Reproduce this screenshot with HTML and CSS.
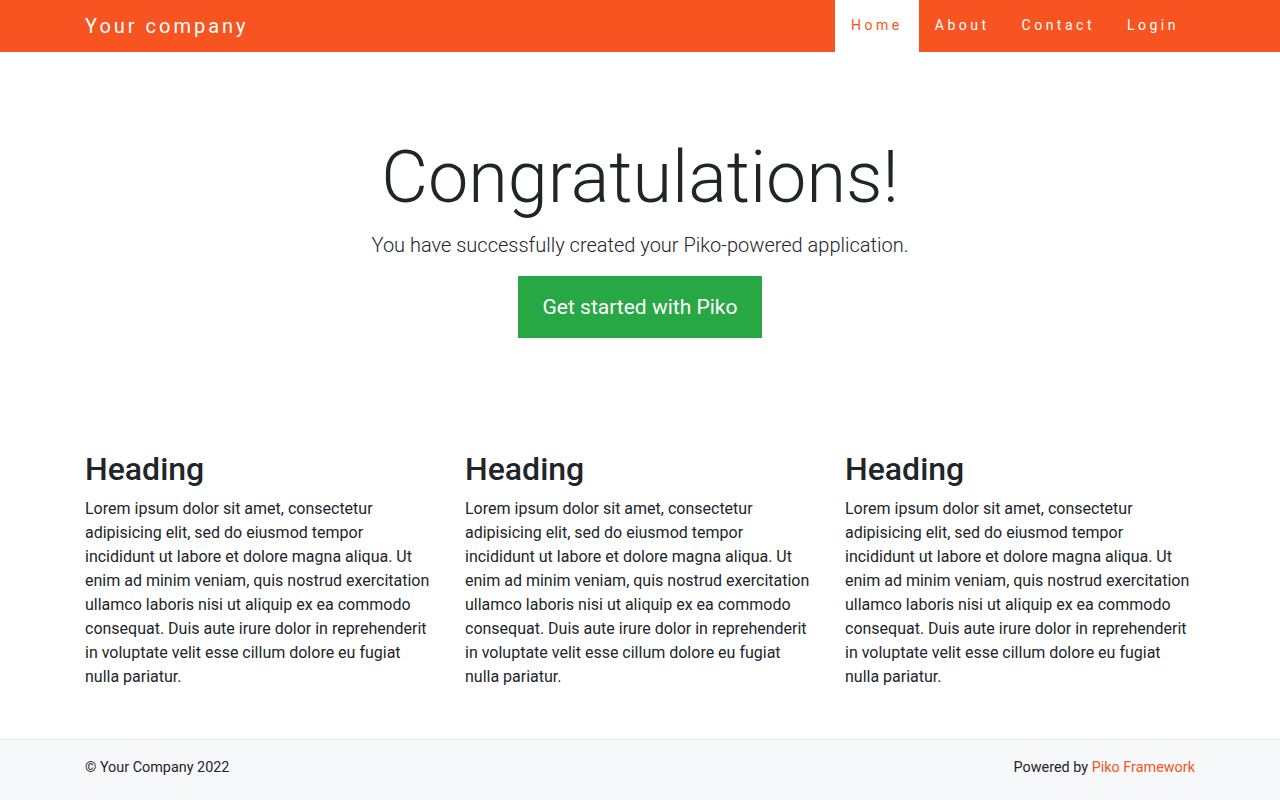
FILE: index.html
```html
<!DOCTYPE html>
<html lang="en">
<head>
<meta charset="utf-8">
<title>Piko</title>
<link rel="stylesheet" href="styles.css">
</head>
<body>
<header class="navbar">
  <div class="container nav-inner">
    <a class="brand" href="#">Your company</a>
    <nav class="nav">
      <a class="nav-link active" href="#">Home</a>
      <a class="nav-link" href="#">About</a>
      <a class="nav-link" href="#">Contact</a>
      <a class="nav-link" href="#">Login</a>
    </nav>
  </div>
</header>
<main>
  <section class="hero">
    <h1 class="hero-title">Congratulations!</h1>
    <p class="lead">You have successfully created your Piko-powered application.</p>
    <a class="btn" href="#">Get started with Piko</a>
  </section>
  <section class="container cols">
    <div class="col">
      <h2>Heading</h2>
      <p>Lorem ipsum dolor sit amet, consectetur adipisicing elit, sed do eiusmod tempor incididunt ut labore et dolore magna aliqua. Ut enim ad minim veniam, quis nostrud exercitation ullamco laboris nisi ut aliquip ex ea commodo consequat. Duis aute irure dolor in reprehenderit in voluptate velit esse cillum dolore eu fugiat nulla pariatur.</p>
    </div>
    <div class="col">
      <h2>Heading</h2>
      <p>Lorem ipsum dolor sit amet, consectetur adipisicing elit, sed do eiusmod tempor incididunt ut labore et dolore magna aliqua. Ut enim ad minim veniam, quis nostrud exercitation ullamco laboris nisi ut aliquip ex ea commodo consequat. Duis aute irure dolor in reprehenderit in voluptate velit esse cillum dolore eu fugiat nulla pariatur.</p>
    </div>
    <div class="col">
      <h2>Heading</h2>
      <p>Lorem ipsum dolor sit amet, consectetur adipisicing elit, sed do eiusmod tempor incididunt ut labore et dolore magna aliqua. Ut enim ad minim veniam, quis nostrud exercitation ullamco laboris nisi ut aliquip ex ea commodo consequat. Duis aute irure dolor in reprehenderit in voluptate velit esse cillum dolore eu fugiat nulla pariatur.</p>
    </div>
  </section>
</main>
<footer class="footer">
  <div class="container footer-inner">
    <span>© Your Company 2022</span>
    <span>Powered by <a href="#">Piko Framework</a></span>
  </div>
</footer>
</body>
</html>
```

FILE: styles.css
```css
* { box-sizing: border-box; }
html, body { margin: 0; padding: 0; }
body {
  font-family: Roboto, "Liberation Sans", sans-serif;
  font-size: 16px;
  line-height: 1.5;
  color: #212529;
  background: #fff;
}
a { text-decoration: none; }
.container {
  width: 1140px;
  margin: 0 auto;
  padding: 0 15px;
}
.navbar {
  background: #f75421;
  height: 52px;
}
.nav-inner {
  display: flex;
  justify-content: space-between;
  align-items: center;
  height: 52px;
}
.brand {
  color: #fff;
  font-size: 20px;
  letter-spacing: 3px;
}
.nav {
  display: flex;
  height: 52px;
}
.nav-link {
  display: flex;
  align-items: center;
  padding: 0 16px 1px;
  color: #fff;
  font-size: 14px;
  letter-spacing: 3.5px;
}
.nav-link.active {
  background: #fff;
  color: #f75421;
}
.hero {
  text-align: center;
  padding: 83px 0 0;
}
.hero-title {
  margin: 0;
  font-size: 72px;
  font-weight: 300;
  line-height: 1.2;
}
.lead {
  margin: 9px 0 16px;
  font-size: 20px;
  font-weight: 300;
  line-height: 1.5;
}
.btn {
  display: inline-block;
  background: #28a745;
  color: #fff;
  font-size: 21px;
  line-height: 32px;
  padding: 15px 25px;
}
.cols {
  display: grid;
  grid-template-columns: repeat(3, 1fr);
  column-gap: 30px;
  padding-top: 112px;
  padding-bottom: 34px;
}
.col h2 {
  margin: 0 0 8px;
  font-size: 32px;
  font-weight: 500;
  line-height: 1.2;
}
.col p {
  margin: 0 0 16px;
}
.footer {
  background: #f7f8fa;
  border-top: 1px solid #e6e9ee;
  font-size: 14.4px;
}
.footer-inner {
  display: flex;
  justify-content: space-between;
  align-items: center;
  padding: 17px 15px 24px;
}
.footer a { color: #f75421; }
```
